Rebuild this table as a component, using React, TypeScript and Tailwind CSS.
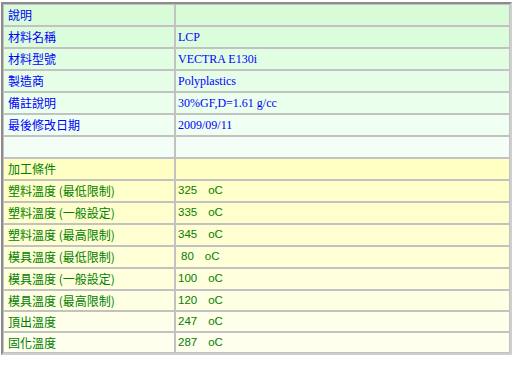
const top: [string, string][] = [
  ["說明", ""],
  ["材料名稱", "LCP"],
  ["材料型號", "VECTRA E130i"],
  ["製造商", "Polyplastics"],
  ["備註說明", "30%GF,D=1.61 g/cc"],
  ["最後修改日期", "2009/09/11"],
  ["", ""],
];
const topBg = ["#d8fcd8", "#dcfddc", "#e1fee2", "#e6fee7", "#ebffed", "#effff2", "#f3fff6"];

const process: [string, string][] = [
  ["加工條件", ""],
  ["塑料溫度 (最低限制)", "325"],
  ["塑料溫度 (一般設定)", "335"],
  ["塑料溫度 (最高限制)", "345"],
  ["模具溫度 (最低限制)", "80"],
  ["模具溫度 (一般設定)", "100"],
  ["模具溫度 (最高限制)", "120"],
  ["頂出溫度", "247"],
  ["固化溫度", "287"],
];
const processBg = ["#ffffc4", "#ffffc9", "#ffffcd", "#ffffd2", "#ffffd8", "#ffffdd", "#ffffe3", "#ffffe9", "#ffffee"];

const cjk = { fontFamily: '"Noto Sans CJK TC", "Noto Sans CJK SC", sans-serif' };
const serif = { fontFamily: '"Liberation Serif", "Noto Sans CJK TC", serif' };
const num = { fontFamily: '"Liberation Sans", "Noto Sans CJK TC", sans-serif' };

export default function App() {
  return (
    <div className="min-h-screen bg-white">
      <div className="ml-[1px] mt-[2px] w-[511px] border-2 border-t-[#8c8c8c] border-l-[#8c8c8c] border-r-[#cfcfcf] border-b-[#cfcfcf]">
        <div className="grid grid-cols-[170px_1fr] gap-[2px] bg-[#c2c2c2] p-[1px]">
          {top.map(([label, value], i) => (
            <div key={"t" + i} className="contents">
              <div
                style={{ ...cjk, backgroundColor: topBg[i] }}
                className="flex h-[20px] items-center pl-[4px] text-[12px] leading-none text-[#0000ff]"
              >
                {label}
              </div>
              <div
                style={{ ...serif, backgroundColor: topBg[i] }}
                className="flex h-[20px] items-center pl-[2px] text-[12px] leading-none text-[#0000ff]"
              >
                {value}
              </div>
            </div>
          ))}
          {process.map(([label, value], i) => {
            const h = i >= 6 ? "h-[19px]" : "h-[20px]";
            return (
              <div key={"p" + i} className="contents">
                <div
                  style={{ ...cjk, backgroundColor: processBg[i] }}
                  className={`flex ${h} items-center pl-[4px] text-[12px] leading-none text-[#008000]`}
                >
                  {label}
                </div>
                <div
                  style={{ ...num, backgroundColor: processBg[i] }}
                  className={`flex ${h} items-center pl-[2px] text-[11.5px] leading-none text-[#008000]`}
                >
                  {value && (
                    <>
                      <span className={value.length === 2 ? "ml-[3px]" : ""}>{value}</span>
                      <span className="ml-[11px]">oC</span>
                    </>
                  )}
                </div>
              </div>
            );
          })}
        </div>
      </div>
    </div>
  );
}
